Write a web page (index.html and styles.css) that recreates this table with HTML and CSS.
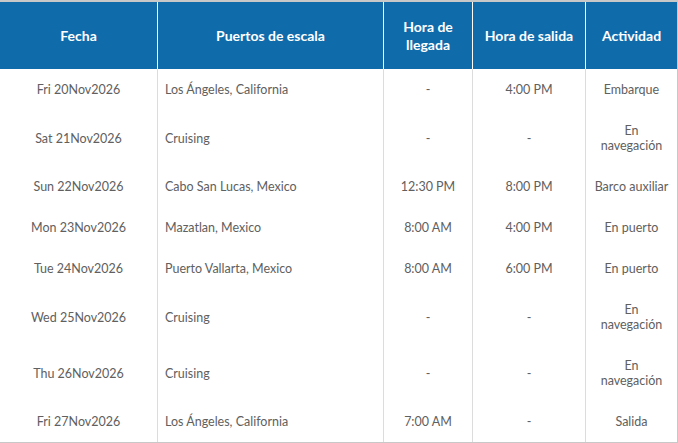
FILE: index.html
```html
<!DOCTYPE html>
<html lang="es">
<head>
<meta charset="utf-8">
<title>Itinerario</title>
<link rel="stylesheet" href="styles.css">
</head>
<body>
<table class="itin">
  <colgroup>
    <col class="c1"><col class="c2"><col class="c3"><col class="c4"><col class="c5">
  </colgroup>
  <thead>
    <tr>
      <th>Fecha</th>
      <th>Puertos de escala</th>
      <th>Hora de<br>llegada</th>
      <th>Hora de salida</th>
      <th>Actividad</th>
    </tr>
  </thead>
  <tbody>
    <tr><td>Fri 20Nov2026</td><td class="port">Los Ángeles, California</td><td>-</td><td>4:00 PM</td><td>Embarque</td></tr>
    <tr><td>Sat 21Nov2026</td><td class="port">Cruising</td><td>-</td><td>-</td><td>En<br>navegación</td></tr>
    <tr><td>Sun 22Nov2026</td><td class="port">Cabo San Lucas, Mexico</td><td>12:30 PM</td><td>8:00 PM</td><td>Barco auxiliar</td></tr>
    <tr><td>Mon 23Nov2026</td><td class="port">Mazatlan, Mexico</td><td>8:00 AM</td><td>4:00 PM</td><td>En puerto</td></tr>
    <tr><td>Tue 24Nov2026</td><td class="port">Puerto Vallarta, Mexico</td><td>8:00 AM</td><td>6:00 PM</td><td>En puerto</td></tr>
    <tr><td>Wed 25Nov2026</td><td class="port">Cruising</td><td>-</td><td>-</td><td>En<br>navegación</td></tr>
    <tr><td>Thu 26Nov2026</td><td class="port">Cruising</td><td>-</td><td>-</td><td>En<br>navegación</td></tr>
    <tr><td>Fri 27Nov2026</td><td class="port">Los Ángeles, California</td><td>7:00 AM</td><td>-</td><td>Salida</td></tr>
  </tbody>
</table>
</body>
</html>
```
FILE: styles.css
```css
html, body {
  margin: 0;
  padding: 0;
  background: #ffffff;
}
body {
  font-family: Lato, "Open Sans", sans-serif;
}
.itin {
  width: 677px;
  border-collapse: separate;
  border-spacing: 0;
  table-layout: fixed;
  border-top: 2px solid #c8c8c8;
  border-right: 1px solid #c8c8c8;
  border-bottom: 1px solid #c8c8c8;
}
.c1 { width: 158px; }
.c2 { width: 226px; }
.c3 { width: 89px; }
.c4 { width: 113px; }
.c5 { width: 91px; }
.itin th {
  background: #106bab;
  color: #ffffff;
  font-weight: 700;
  font-size: 14px;
  line-height: 18px;
  height: 67px;
  padding: 0 4px;
  box-sizing: border-box;
  text-align: center;
  vertical-align: middle;
  border-right: 1px solid #ffffff;
}
.itin th:last-child { border-right: none; }
.itin td {
  color: #606060;
  font-size: 12.5px;
  line-height: 15px;
  padding: 13px 4px;
  text-align: center;
  vertical-align: middle;
  border-right: 1px solid #dcdcdc;
}
.itin td:last-child { border-right: none; }
.itin td.port {
  text-align: left;
  padding-left: 7px;
}
```
